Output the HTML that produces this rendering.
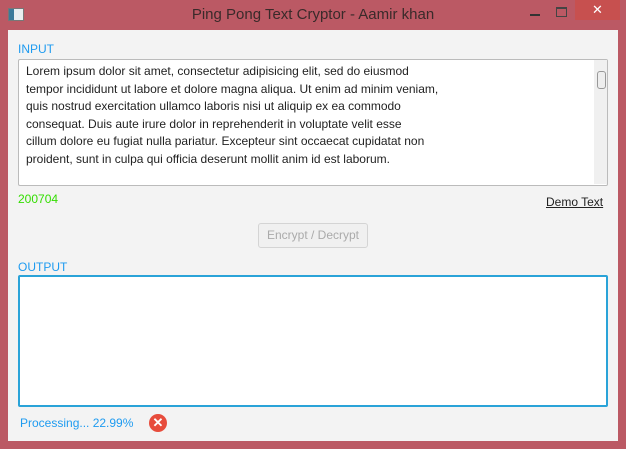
<!DOCTYPE html>
<html><head><style>
body{margin:0;width:626px;height:449px;background:#bb5964;position:relative;overflow:hidden;font-family:"Liberation Sans",sans-serif}
.t{position:absolute;left:0;top:0;width:626px;height:30px;text-align:center;line-height:30px;font-size:15px;color:#3a2a2a}
.client{position:absolute;left:8px;top:30px;width:610px;height:411px;background:#f3f3f3}
.a{position:absolute}
.lbl{color:#1e9bf0;font-size:12px}
</style></head><body>
<div class="a" style="left:8px;top:8px;width:14px;height:11px;background:#e8eef0;border:1px solid #777"><div style="width:5px;height:11px;background:#3a7a9a"></div></div>
<div class="t">Ping Pong Text Cryptor - Aamir khan</div>
<div class="a" style="left:530px;top:14px;width:10px;height:2px;background:#333"></div>
<div class="a" style="left:556px;top:7px;width:9px;height:7px;border:1px solid #444;border-top-width:2px"></div>
<div class="a" style="left:575px;top:0;width:45px;height:20px;background:#c7504f;color:#fff;text-align:center;line-height:20px;font-size:13px">✕</div>
<div class="client"></div>
<div class="a lbl" style="left:18px;top:42px">INPUT</div>
<div class="a" style="left:18px;top:59px;width:588px;height:125px;background:#fff;border:1px solid #bbb;border-radius:2px"></div>
<div class="a" style="left:594px;top:60px;width:13px;height:124px;background:#f0f0f0"></div>
<div class="a" style="left:597px;top:71px;width:7px;height:16px;border:1px solid #999;border-radius:3px;background:#eee"></div>
<div class="a" style="left:26px;top:63px;font-size:12px;line-height:17.5px;color:#222;white-space:pre">Lorem ipsum dolor sit amet, consectetur adipisicing elit, sed do eiusmod
tempor incididunt ut labore et dolore magna aliqua. Ut enim ad minim veniam,
quis nostrud exercitation ullamco laboris nisi ut aliquip ex ea commodo
consequat. Duis aute irure dolor in reprehenderit in voluptate velit esse
cillum dolore eu fugiat nulla pariatur. Excepteur sint occaecat cupidatat non
proident, sunt in culpa qui officia deserunt mollit anim id est laborum.</div>
<div class="a" style="left:18px;top:192px;font-size:12px;color:#33dd00">200704</div>
<div class="a" style="left:546px;top:195px;font-size:12px;color:#222;text-decoration:underline">Demo Text</div>
<div class="a" style="left:258px;top:223px;width:108px;height:23px;border:1px solid #d4d4d4;border-radius:3px;background:#f0f0f0;color:#aaa;font-size:12px;text-align:center;line-height:23px">Encrypt / Decrypt</div>
<div class="a lbl" style="left:18px;top:260px">OUTPUT</div>
<div class="a" style="left:18px;top:275px;width:586px;height:128px;background:#fff;border:2px solid #2aa3d8;border-radius:2px"></div>
<div class="a lbl" style="left:20px;top:416px;font-size:12px">Processing... 22.99%</div>
<div class="a" style="left:149px;top:414px;width:18px;height:18px;border-radius:50%;background:#e74c3c;color:#fff;text-align:center;line-height:18px;font-size:13px;font-weight:bold">✕</div>
</body></html>
